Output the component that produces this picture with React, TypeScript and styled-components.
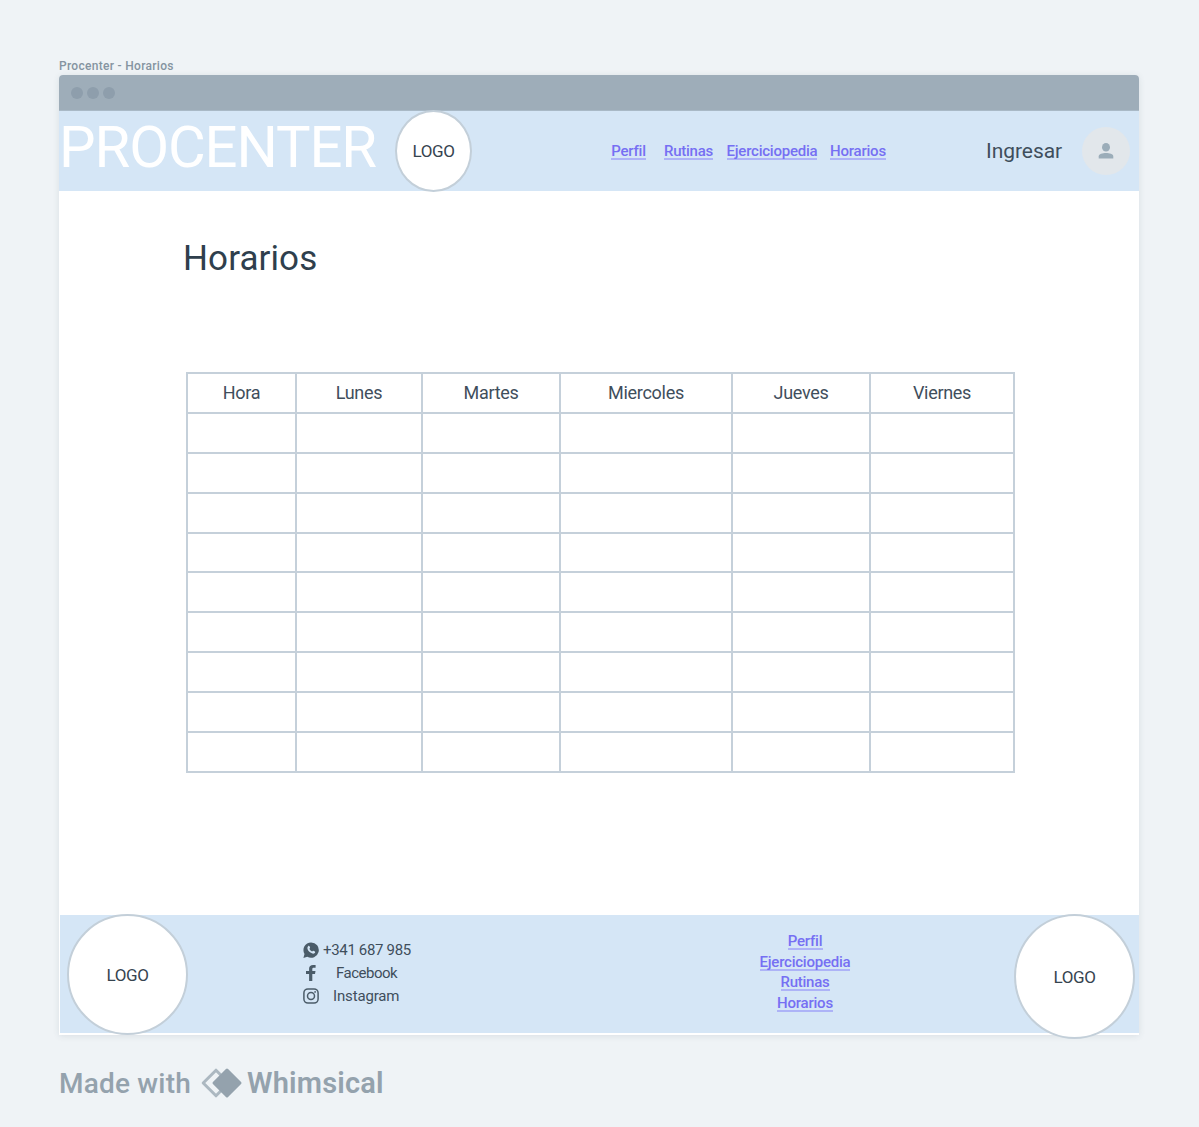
import React from "react";
import styled, { createGlobalStyle } from "styled-components";

const Global = createGlobalStyle`
  * { box-sizing: border-box; }
  body { margin: 0; background: #eff3f6; font-family: Roboto, "Liberation Sans", sans-serif; color: #3f4e5c; }
`;

const Board = styled.main`
  width: 1199px;
  height: 1127px;
  padding: 58px 0 0 59px;
  overflow: hidden;
`;
const FrameLabel = styled.div`
  height: 17px;
  font-size: 12px;
  line-height: 16px;
  font-weight: 500;
  letter-spacing: 0.3px;
  color: #8594a1;
`;
const Browser = styled.section`
  width: 1080px;
  height: 960px;
  display: flex;
  flex-direction: column;
  background: #fff;
  border-radius: 4px 4px 0 0;
  box-shadow: 0 1px 6px rgba(60, 80, 100, 0.12);
`;
const TitleBar = styled.div`
  height: 36px;
  flex: none;
  display: flex;
  align-items: center;
  gap: 4px;
  padding-left: 12px;
  background: #9eadb9;
  border-bottom: 1px solid #a9b9c6;
  border-radius: 4px 4px 0 0;
`;
const Dot = styled.i`
  width: 12px;
  height: 12px;
  border-radius: 50%;
  background: #8e9eac;
`;
const Header = styled.header`
  height: 80px;
  flex: none;
  display: flex;
  align-items: center;
  background: #d5e6f6;
`;
const Brand = styled.div`
  width: 336px;
  padding: 0 0 9px 0;
  font-size: 58px;
  line-height: 66px;
  letter-spacing: -1.1px;
  color: #fff;
`;
const LogoCircle = styled.div<{ $w: number; $h: number }>`
  width: ${(p) => p.$w}px;
  height: ${(p) => p.$h}px;
  flex: none;
  display: grid;
  place-items: center;
  border: 2px solid #c3cfd9;
  border-radius: 50%;
  background: #fff;
  font-size: 17px;
  letter-spacing: -0.4px;
  color: #36444f;
`;
const Nav = styled.nav`
  display: flex;
  margin-left: 139px;
`;
const Link = styled.a<{ $w: number; $gap?: number; $top?: number }>`
  width: ${(p) => p.$w}px;
  height: 17px;
  margin: ${(p) => p.$top || 0}px ${(p) => p.$gap || 0}px 0 0;
  display: flex;
  justify-content: center;
  border-bottom: 2px solid #adb3f7;
  font-size: 15px;
  line-height: 17px;
  font-weight: 500;
  letter-spacing: -0.23px;
  white-space: nowrap;
  color: #766ff3;
`;
const SignIn = styled.span`
  width: 96px;
  margin-left: 100px;
  font-size: 21px;
  line-height: 26px;
  letter-spacing: -0.05px;
`;
const Avatar = styled.div`
  width: 48px;
  height: 48px;
  display: grid;
  place-items: center;
  border-radius: 50%;
  background: #e2e7eb;
`;
const Content = styled.div`
  flex: 1;
  padding: 46px 0 0 124px;
`;
const Title = styled.h1`
  height: 135px;
  margin: 0;
  font-size: 35px;
  line-height: 43px;
  font-weight: 400;
  letter-spacing: 0.1px;
  color: #2f3f4d;
`;
const Table = styled.table`
  width: 829px;
  margin-left: 3px;
  table-layout: fixed;
  border-collapse: collapse;
`;
const Cell = styled.td`
  height: 39.9px;
  padding: 0;
  border: 2px solid #c5d0da;
  text-align: center;
  font-size: 18px;
  line-height: 24px;
  letter-spacing: -0.3px;
`;
const Footer = styled.footer`
  height: 118px;
  flex: none;
  display: flex;
  align-items: flex-start;
  margin: 0 0 2px 1px;
  padding-left: 7px;
  background: #d5e6f6;
`;
const Raised = styled.div`
  margin-top: -1px;
`;
const Contacts = styled.div`
  width: 112px;
  margin: 23px 0 0 114px;
  display: flex;
  flex-direction: column;
`;
const Contact = styled.div`
  height: 23px;
  display: flex;
  align-items: center;
  font-size: 15px;
  svg { flex: none; }
`;
const ContactText = styled.span<{ $pad: number; $ls: number }>`
  padding-left: ${(p) => p.$pad}px;
  letter-spacing: ${(p) => p.$ls}px;
  white-space: nowrap;
`;
const FooterLinks = styled.nav`
  width: 92px;
  margin: 18px 163px 0 345px;
  display: flex;
  flex-direction: column;
  align-items: center;
`;
const MadeWith = styled.div`
  height: 40px;
  margin-top: 28px;
  display: flex;
  align-items: center;
  color: #94a2ad;
`;
const MadeText = styled.span<{ $w: number; $size: number; $ls: number; $weight: number; $left?: number }>`
  width: ${(p) => p.$w}px;
  margin-left: ${(p) => p.$left || 0}px;
  font-size: ${(p) => p.$size}px;
  font-weight: ${(p) => p.$weight};
  letter-spacing: ${(p) => p.$ls}px;
  white-space: nowrap;
`;

const columns: [string, number][] = [
  ["Hora", 109], ["Lunes", 126], ["Martes", 138], ["Miercoles", 172], ["Jueves", 138], ["Viernes", 144],
];

export default function App() {
  return (
    <Board>
      <Global />
      <FrameLabel>Procenter - Horarios</FrameLabel>
      <Browser>
        <TitleBar><Dot /><Dot /><Dot /></TitleBar>
        <Header>
          <Brand>PROCENTER</Brand>
          <LogoCircle $w={77} $h={82}>LOGO</LogoCircle>
          <Nav>
            <Link $w={35} $gap={18}>Perfil</Link>
            <Link $w={49} $gap={14}>Rutinas</Link>
            <Link $w={90} $gap={13}>Ejerciciopedia</Link>
            <Link $w={56}>Horarios</Link>
          </Nav>
          <SignIn>Ingresar</SignIn>
          <Avatar>
            <svg width="16" height="16" viewBox="0 0 16 16" fill="#9badb9">
              <ellipse cx="8" cy="4.3" rx="4" ry="4.3" />
              <path d="M.7 15.6v-2.2C.7 11 4.6 10 8 10s7.3 1 7.3 3.400v2.200z" />
            </svg>
          </Avatar>
        </Header>
        <Content>
          <Title>Horarios</Title>
          <Table>
            <colgroup>{columns.map(([n, w]) => <col key={n} width={w} />)}</colgroup>
            <tbody>
              <tr>{columns.map(([n]) => <Cell key={n}>{n}</Cell>)}</tr>
              {Array.from({ length: 9 }, (_, r) => (
                <tr key={r}>{columns.map(([n]) => <Cell key={n} />)}</tr>
              ))}
            </tbody>
          </Table>
        </Content>
        <Footer>
          <Raised><LogoCircle $w={121} $h={121}>LOGO</LogoCircle></Raised>
          <Contacts>
            <Contact>
              <svg width="18" height="18" viewBox="0 0 18 18">
                <path d="M9 1.400a7.700 7.700 0 1 1-3.700 14.400L1.400 16.900l1.100-3.900A7.700 7.700 0 0 1 9 1.400z" fill="#4b5c69" />
                <path d="M6.300 5.100c.5-.5 1-.3 1.200.2l.6 1.300c.1.400-.7 1-.6 1.300.6 1.200 1.400 1.900 2.600 2.500.4.100.9-.9 1.300-.7l1.500.7c.6.400.1 1.500-.5 1.900-1.100.7-2.500.2-3.900-.7C6.900 10.600 5.500 9 5.400 7.200c0-.8.400-1.700.9-2.100z" fill="#d5e6f6" />
              </svg>
              <ContactText $pad={3} $ls={-0.33}>+341 687 985</ContactText>
            </Contact>
            <Contact>
              <svg width="18" height="18" viewBox="0 0 18 18" fill="#4b5c69">
                <path d="M7.100 17V9.900H4V7.100h3.100V4.600C7.100 2.300 8.700 1 11 1h2.600v2.700h-1.800c-1 0-1.500.5-1.500 1.400v2h3.200l-.5 2.800h-2.700V17z" />
              </svg>
              <ContactText $pad={16} $ls={-0.5}>Facebook</ContactText>
            </Contact>
            <Contact>
              <svg width="18" height="18" viewBox="0 0 18 18" fill="none" stroke="#4b5c69" strokeWidth="1.500">
                <rect x="1.900" y="1.900" width="14.200" height="14.200" rx="4" />
                <circle cx="9" cy="9" r="3.500" />
                <circle cx="13.100" cy="4.900" r=".9" fill="#4b5c69" stroke="none" />
              </svg>
              <ContactText $pad={13} $ls={-0.15}>Instagram</ContactText>
            </Contact>
          </Contacts>
          <FooterLinks>
            <Link $w={35}>Perfil</Link>
            <Link $w={90} $top={4}>Ejerciciopedia</Link>
            <Link $w={49} $top={3}>Rutinas</Link>
            <Link $w={56} $top={4}>Horarios</Link>
          </FooterLinks>
          <Raised><LogoCircle $w={121} $h={125}>LOGO</LogoCircle></Raised>
        </Footer>
      </Browser>
      <MadeWith>
        <MadeText $w={142} $size={28} $ls={0.2} $weight={500}>Made with</MadeText>
        <svg width="42" height="32" viewBox="0 0 42 32">
          <path d="M15 3.200L2.200 16 15 28.800 27.800 16z" fill="none" stroke="#acb8c1" strokeWidth="3" strokeLinejoin="round" />
          <path d="M26 3L13 16l13 13 13-13z" fill="#94a2ad" stroke="#94a2ad" strokeWidth="3" strokeLinejoin="round" />
        </svg>
        <MadeText $w={140} $left={4} $size={29} $ls={0.2} $weight={600}>Whimsical</MadeText>
      </MadeWith>
    </Board>
  );
}
